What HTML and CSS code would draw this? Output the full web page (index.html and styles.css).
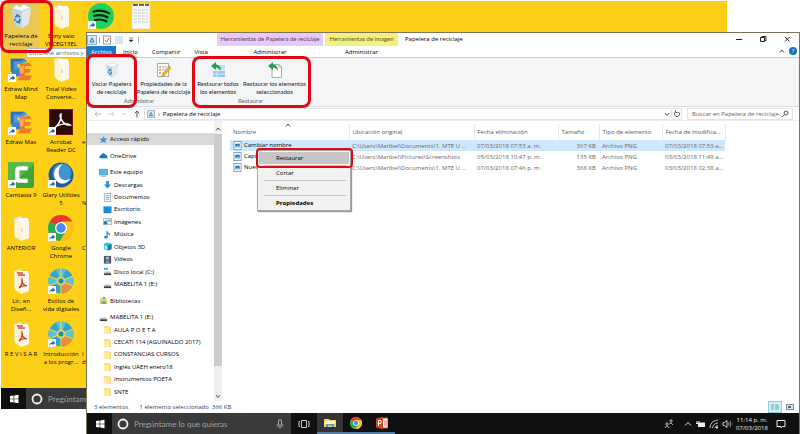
FILE: index.html
```html
<!DOCTYPE html>
<html lang="es">
  <head>
    <meta charset="UTF-8" />
    <meta name="viewport" content="width=device-width, initial-scale=1.0" />
    <title>Papelera de reciclaje</title>
    <link rel="stylesheet" href="styles.css" />
  </head>
  <body>
    <!-- shared icons -->
    <svg class="defs" aria-hidden="true">
      <symbol id="i-bin" viewBox="0 0 26 28">
        <path d="M3 6 L14 9 L14 27 L6 24 Z" fill="#c3d3e0" />
        <path d="M14 9 L24 5 L21 23 L14 27 Z" fill="#dfe8ef" />
        <path d="M3 6 L8 2 L12 4 L16 1 L24 5 L14 9 Z" fill="#f7fafc" stroke="#aebdca" stroke-width=".7" />
        <path d="M7 5 L13 7 L20 4 L16 3 L12 5 Z" fill="#fff" />
        <path d="M7 16 L9 13 L12 15 M12 17 L11 21 L8 20 M7 19 L6 17" fill="none" stroke="#1f7fd0" stroke-width="1.9" />
      </symbol>
      <symbol id="i-binsmall" viewBox="0 0 10 10">
        <rect x=".5" y=".5" width="9" height="9" fill="#d6e6f3" stroke="#8fb2cd" />
        <path d="M3 7 L5 3 L7 7 Z" fill="none" stroke="#2b74b8" />
      </symbol>
      <symbol id="i-shortcut" viewBox="0 0 8 8">
        <rect width="8" height="8" fill="#fff" />
        <path d="M1.5 7 C1.5 4.500 3 3.200 4.500 3.200 V1.500 L7.200 4 L4.500 6.300 V4.800 C3.200 4.800 2.300 5.500 1.500 7 Z" fill="#1b5fb4" />
      </symbol>
      <symbol id="i-folderbig" viewBox="0 0 20 26">
        <path d="M3 3 L10 1 V23 L3 20 Z" fill="#f6e6ad" />
        <path d="M7 3 L17 3 V22 L7 24 Z" fill="#fff" />
        <path d="M4 4 L10 7 V26 L4 22 Z" fill="#fdf3d0" />
        <path d="M10 7 L18 5 V23 L10 26 Z" fill="#fbf7ea" />
        <path d="M11 13 V17" stroke="#cfc9b4" />
      </symbol>
      <symbol id="i-folderpdf" viewBox="0 0 20 26">
        <use href="#i-folderbig" />
        <path d="M6 5 H12 M7 7 H14" stroke="#e0473a" stroke-width="1.500" />
        <path d="M8 20 C11 17 12 13 11 11 C10 14 13 18 16 18 C13 17 10 18 8 20" fill="none" stroke="#c62f27" stroke-width="1.200" />
      </symbol>
      <symbol id="i-edraw" viewBox="0 0 26 28">
        <path d="M2 3 H17 L20 6 L13 9 H9 V12 H17 L13 17 H2 Z" fill="#4b98dc" />
        <path d="M2 3 H17 L13 6 H5 V14 L2 17 Z" fill="#2d6fbb" />
        <path d="M12 9 L22 7 L25 11 H17 V14 H24 L22 18 H17 V21 H25 L22 26 H9 L12 22 Z" fill="#f0792b" />
        <path d="M3 15 L13 14 L16 17 L11 22 H3 Z" fill="#3c83cb" />
        <path d="M11 12 L16 10 V18 L12 20 Z" fill="#f9a662" />
      </symbol>
      <symbol id="i-acrobat" viewBox="0 0 24 26">
        <rect x=".5" y=".5" width="23" height="25" fill="#2a0a0a" stroke="#6c1512" />
        <path d="M4 20 C9 17 13 11 12 5 C9 6 14 17 21 16 C16 13 8 16 4 20 Z" fill="none" stroke="#fff" stroke-width="1.500" />
      </symbol>
      <symbol id="i-camtasia" viewBox="0 0 25 25">
        <rect width="25" height="25" rx="2" fill="#3fa535" />
        <path d="M0 2 Q0 0 2 0 H23 Q25 0 25 2 L0 25 Z" fill="#57b947" />
        <path d="M19 4 H11 Q7 4 7 8 V16 Q7 20 11 20 H19 V16 H12 Q11 16 11 15 V9 Q11 8 12 8 H19 Z" fill="#fff" />
      </symbol>
      <symbol id="i-glary" viewBox="0 0 26 26">
        <circle cx="13" cy="13" r="12.500" fill="#1d5c9f" />
        <circle cx="14" cy="11" r="9.500" fill="#3f93cf" />
        <path d="M15 2 C6 4 4 13 8 18 C12 24 20 22 23 16 C18 20 12 18 11 13 C10 8 12 4 15 2 Z" fill="#fff" />
      </symbol>
      <symbol id="i-chrome" viewBox="0 0 24 24">
        <circle cx="12" cy="12" r="12" fill="#fbc116" />
        <path d="M12 12 L1.600 6 A12 12 0 0 1 22.400 6 H12 Z" fill="#e33b2e" />
        <path d="M12 12 L1.600 6 A12 12 0 0 0 11 24 L17 14.500 Z" fill="#2da94f" />
        <path d="M12 12 L22.400 6 A12 12 0 0 1 11 24 L17 14.500 Z" fill="#fbc116" />
        <circle cx="12" cy="12" r="5.600" fill="#fff" />
        <circle cx="12" cy="12" r="4.300" fill="#4a8af4" />
      </symbol>
      <symbol id="i-wheel" viewBox="0 0 26 26">
        <circle cx="13" cy="13" r="12.500" fill="#2fa6cf" />
        <path d="M13 13 L8 1.500 A12.500 12.500 0 0 1 18 1.500 Z" fill="#5cc0dc" />
        <path d="M13 13 L24.500 8 A12.500 12.500 0 0 1 24 18 Z" fill="#5cc0dc" />
        <path d="M13 13 L24 18 A12.500 12.500 0 0 1 14 25.500 Z" fill="#ee8a3c" />
        <path d="M13 13 L1.500 8 A12.500 12.500 0 0 0 1.500 18 Z" fill="#5cc0dc" />
        <path d="M1 8 L25 18 M25 8 L1 18 M13 0 V26" stroke="#fbd22b" stroke-width="1.200" />
        <circle cx="13" cy="13" r="4.500" fill="#c9d67a" />
        <circle cx="13" cy="13" r="2.500" fill="#2b8d90" />
      </symbol>
      <symbol id="i-spotify" viewBox="0 0 24 24">
        <circle cx="12" cy="12" r="12" fill="#1fd15f" />
        <path d="M5 8 Q12.500 5.500 19.500 9.500 M5.500 12 Q12 10 18 13.200 M6.500 15.800 Q12 14.300 17 16.900" fill="none" stroke="#10240f" stroke-width="2" stroke-linecap="round" />
      </symbol>
      <symbol id="i-sheet" viewBox="0 0 20 26">
        <rect x="1" y="1" width="18" height="25" fill="#fbfbf6" stroke="#dcd8c4" stroke-width=".7" />
        <path d="M2 2 H7 M8 2 H13 M14 2 H18" stroke="#333" stroke-width="1.500" />
        <path d="M3 7 H17 M3 10 H17 M3 13 H17 M3 16 H17 M3 19 H17" stroke="#b9c4d4" stroke-dasharray="3 1" />
      </symbol>
      <symbol id="i-props" viewBox="0 0 16 16">
        <rect x="1.500" y="1.500" width="11" height="13" fill="#fff" stroke="#a9a9a9" />
        <path d="M3 5 H5 M3 8 H5 M3 11 H5" stroke="#c99a2c" stroke-width="1.500" />
        <path d="M6 5 H11 M6 8 H10 M6 11 H9" stroke="#aaa" />
        <path d="M6 13 L13 4 L15 6 L8 14 L5.500 14.500 Z" fill="#f0b72f" stroke="#a57a1c" stroke-width=".5" />
      </symbol>
      <symbol id="i-restoreall" viewBox="0 0 16 16">
        <rect x="7" y="3" width="8" height="5" fill="#b6defa" />
        <rect x="3" y="9" width="12" height="6" fill="#8cc8f4" />
        <path d="M7 8 V15 M3 12 H15" stroke="#d7edfc" />
        <path d="M1 4 L6 0 V2.500 Q11 3 11 9 Q9 5.500 6 5.500 V8 Z" fill="#1f9d4b" />
      </symbol>
      <symbol id="i-restoresel" viewBox="0 0 16 16">
        <path d="M5 2.500 H12 L14.500 5 V15.500 H5 Z" fill="#fff" stroke="#a9a9a9" />
        <path d="M12 2.500 V5 H14.500" fill="none" stroke="#a9a9a9" />
        <path d="M1 4 L6 0 V2.500 Q11 3 11 9 Q9 5.500 6 5.500 V8 Z" fill="#1f9d4b" />
      </symbol>
      <symbol id="i-png" viewBox="0 0 9 10">
        <rect x=".5" y=".5" width="8" height="9" fill="#fff" stroke="#6ba2cf" />
        <rect x="2" y="3" width="5" height="4" fill="#2a76b6" />
        <path d="M2 7 L4 5 L5 6 L6 5 L7 7" fill="#9ad0ee" />
      </symbol>
      <symbol id="i-folder" viewBox="0 0 10 10">
        <path d="M1 1 H6 L7 2 H9 V10 H1 Z" fill="#fbdc80" />
        <path d="M1 3 H7 V10 H1 Z" fill="#ffe9a6" />
      </symbol>
      <symbol id="i-drive" viewBox="0 0 10 10">
        <path d="M2 5 H8 L9 7 H1 Z" fill="#b9bec2" />
        <rect x="1" y="7" width="8" height="2" fill="#3c4044" />
      </symbol>
      <symbol id="i-windows" viewBox="0 0 10 10">
        <path d="M1 2 L4.600 1.500 V4.700 H1 Z M5.200 1.400 L9.500 .8 V4.700 H5.200 Z M1 5.300 H4.600 V8.500 L1 8 Z M5.200 5.300 H9.500 V9.200 L5.200 8.600 Z" fill="#fff" />
      </symbol>
      <symbol id="i-cortana" viewBox="0 0 12 12">
        <circle cx="6" cy="6" r="4.500" fill="none" stroke="#f2f2f2" stroke-width="1.800" />
      </symbol>
      <symbol id="i-down" viewBox="0 0 8 8"><path d="M2 3 L4 5.500 L6 3" fill="none" stroke="#555" /></symbol>
      <symbol id="i-up" viewBox="0 0 8 8"><path d="M2 5.500 L4 3 L6 5.500" fill="none" stroke="#555" /></symbol>
    </svg>

    <main class="desktop">
      <ul class="icons">
        <li><a class="shortcut selected" href="#"><svg><use href="#i-bin" /></svg>Papelera de reciclaje</a></li>
        <li><a class="shortcut" href="#"><svg><use href="#i-edraw" /></svg><svg class="link"><use href="#i-shortcut" /></svg>Edraw Mind Map</a></li>
        <li><a class="shortcut" href="#"><svg><use href="#i-edraw" /></svg><svg class="link"><use href="#i-shortcut" /></svg>Edraw Max</a></li>
        <li><a class="shortcut" href="#"><svg><use href="#i-camtasia" /></svg><svg class="link"><use href="#i-shortcut" /></svg>Camtasia 9</a></li>
        <li><a class="shortcut" href="#"><svg><use href="#i-folderbig" /></svg>ANTERIOR</a></li>
        <li><a class="shortcut" href="#"><svg><use href="#i-folderpdf" /></svg>Lic. en<br />Diseñ...</a></li>
        <li><a class="shortcut" href="#"><svg><use href="#i-folderpdf" /></svg>R E V I S A R</a></li>
        <li><a class="shortcut" href="#"><svg><use href="#i-folderbig" /></svg>Sony vaio VPCEG13EL</a></li>
        <li><a class="shortcut" href="#"><svg><use href="#i-folderbig" /></svg>Total Video Converte...</a></li>
        <li><a class="shortcut" href="#"><svg><use href="#i-acrobat" /></svg><svg class="link"><use href="#i-shortcut" /></svg>Acrobat<br />Reader DC</a></li>
        <li><a class="shortcut" href="#"><svg><use href="#i-glary" /></svg><svg class="link"><use href="#i-shortcut" /></svg>Glary Utilities<br />5</a></li>
        <li><a class="shortcut" href="#"><svg><use href="#i-chrome" /></svg><svg class="link"><use href="#i-shortcut" /></svg>Google<br />Chrome</a></li>
        <li><a class="shortcut" href="#"><svg><use href="#i-wheel" /></svg><svg class="link"><use href="#i-shortcut" /></svg>Estilos de<br />vida digitales</a></li>
        <li><a class="shortcut" href="#"><svg><use href="#i-wheel" /></svg><svg class="link"><use href="#i-shortcut" /></svg>Introducción<br />a los progr...</a></li>
        <li><a class="shortcut" href="#" aria-label="Spotify"><svg><use href="#i-spotify" /></svg><svg class="link"><use href="#i-shortcut" /></svg></a></li>
        <li></li>
        <li><a class="shortcut behind" href="#"><svg></svg>e</a></li>
        <li><a class="shortcut behind" href="#"><svg></svg><br />N</a></li>
        <li><a class="shortcut behind" href="#"><svg></svg>C</a></li>
        <li></li>
        <li><a class="shortcut behind" href="#"><svg></svg>I<br />d</a></li>
        <li><a class="shortcut" href="#" aria-label="Hoja"><svg><use href="#i-sheet" /></svg></a></li>
      </ul>
      <div class="tooltip">Contiene archivos y</div>
      <div class="taskbar">
        <button class="start" aria-label="Inicio"><svg><use href="#i-windows" /></svg></button>
        <label class="ask"><svg><use href="#i-cortana" /></svg><input type="text" placeholder="Pregúntame lo que quieras" aria-label="Buscar" /></label>
      </div>
    </main>

    <section class="window">
      <header class="titlebar">
        <div class="title-left">
          <div class="quick">
            <svg><use href="#i-binsmall" /></svg><i></i>
            <svg viewBox="0 0 10 10"><rect x="1.500" y="1" width="7" height="8" fill="#fff" stroke="#999" /><path d="M3 5 L5 7 L7 3" fill="none" stroke="#d2553c" /></svg>
            <svg viewBox="0 0 10 10"><rect x="1" y="1" width="8" height="8" fill="#d9e4f5" /></svg>
            <svg viewBox="0 0 10 10"><path d="M3 3 H7 M3 5 H7 L5 7 Z" fill="#333" stroke="#333" stroke-width=".6" /></svg><i></i>
          </div>
          <nav class="tabs">
            <button class="file">Archivo</button>
            <button>Inicio</button>
            <button>Compartir</button>
            <button>Vista</button>
          </nav>
        </div>
        <div class="context purple"><span>Herramientas de Papelera de reciclaje</span><button>Administrar</button></div>
        <div class="context yellow"><span>Herramientas de imagen</span><button>Administrar</button></div>
        <h1>Papelera de reciclaje</h1>
        <div class="title-right">
          <div class="controls">
            <button aria-label="Minimizar"><svg viewBox="0 0 8 8"><path d="M1 4.500 H7" stroke="#222" /></svg></button>
            <button aria-label="Restaurar ventana"><svg viewBox="0 0 8 8"><path d="M1.500 2.500 H5.500 V6.500 H1.500 Z M3 2.500 V1.500 H7 V5.500 H5.500" fill="none" stroke="#222" /></svg></button>
            <button aria-label="Cerrar"><svg viewBox="0 0 8 8"><path d="M2 2 L6.500 6.500 M6.500 2 L2 6.500" stroke="#222" /></svg></button>
          </div>
          <div class="help">
            <button aria-label="Contraer cinta"><svg><use href="#i-up" /></svg></button>
            <button class="question" aria-label="Ayuda">?</button>
          </div>
        </div>
      </header>

      <div class="ribbon">
        <div class="group">
          <div class="actions">
            <button class="empty"><svg><use href="#i-bin" /></svg>Vaciar Papelera<br />de reciclaje</button>
            <button class="props"><svg><use href="#i-props" /></svg>Propiedades de la<br />Papelera de reciclaje</button>
          </div>
          <span>Administrar</span>
        </div>
        <div class="group">
          <div class="actions">
            <button class="all"><svg><use href="#i-restoreall" /></svg>Restaurar todos<br />los elementos</button>
            <button class="sel"><svg><use href="#i-restoresel" /></svg>Restaurar los elementos<br />seleccionados</button>
          </div>
          <span>Restaurar</span>
        </div>
      </div>

      <div class="address">
        <div class="history">
          <button aria-label="Atrás"><svg viewBox="0 0 8 8"><path d="M7.500 4 H1 M3.500 1.500 L1 4 L3.500 6.500" fill="none" stroke="#bbb" /></svg></button>
          <button aria-label="Adelante"><svg viewBox="0 0 8 8"><path d="M.5 4 H7 M4.500 1.500 L7 4 L4.500 6.500" fill="none" stroke="#ccc" /></svg></button>
          <button aria-label="Recientes"><svg viewBox="0 0 8 8"><path d="M3 3.500 L4 4.500 L5 3.500" fill="none" stroke="#aaa" /></svg></button>
          <button aria-label="Subir"><svg viewBox="0 0 8 8"><path d="M4 7.500 V1 M1.500 3.500 L4 1 L6.500 3.500" fill="none" stroke="#555" /></svg></button>
        </div>
        <div class="path">
          <svg class="place"><use href="#i-binsmall" /></svg>
          <span class="sep">›</span>
          <span class="crumb">Papelera de reciclaje</span>
          <button aria-label="Anteriores"><svg><use href="#i-down" /></svg></button>
          <button class="refresh" aria-label="Actualizar"><svg viewBox="0 0 8 8"><path d="M5.500 2 A2.500 2.500 0 1 1 2.500 2 M2.500 .5 V2.500 H4.500" fill="none" stroke="#555" /></svg></button>
        </div>
        <label class="search">
          <input type="text" placeholder="Buscar en Papelera de reciclaje" aria-label="Buscar en Papelera de reciclaje" />
          <svg viewBox="0 0 8 8"><circle cx="5" cy="3" r="2" fill="none" stroke="#555" /><path d="M3.500 4.500 L1 7" stroke="#555" /></svg>
        </label>
      </div>

      <div class="content">
        <nav class="tree">
          <a class="top current" href="#"><svg viewBox="0 0 10 10"><path d="M5 1 L6.500 4 L9.500 4 L7 6 L8 9 L5 7.500 L1 9 L3 6 L.5 4 L4 4 Z" fill="#3f97dd" /></svg>Acceso rápido</a>
          <a class="top gap" href="#"><svg viewBox="0 0 10 10"><path d="M1 8 Q-.5 5 2.500 4.500 Q4 1 7 4 Q10 4.500 9.500 8 Z" fill="#1373c4" /></svg>OneDrive</a>
          <a class="top gap" href="#"><svg viewBox="0 0 10 10"><rect x=".5" y="1.500" width="9" height="6" fill="#56b7f0" stroke="#7696ab" /><path d="M2 9 H8" stroke="#718796" /></svg>Este equipo</a>
          <a href="#"><svg viewBox="0 0 10 10"><path d="M3.500 1 H6.500 V5 H9 L5 9.500 L1 5 H3.500 Z" fill="#2f89d8" /></svg>Descargas</a>
          <a href="#"><svg viewBox="0 0 10 10"><rect x="1.500" y=".5" width="7" height="9" fill="#fff" stroke="#9eb2c0" /><path d="M3 3 H7 M3 5 H7 M3 7 H7" stroke="#6da5d3" /></svg>Documentos</a>
          <a href="#"><svg viewBox="0 0 10 10"><rect x=".5" y="1.500" width="9" height="7" fill="#1b8de0" /><path d="M1 8.500 H9" stroke="#0b5ea8" /></svg>Escritorio</a>
          <a href="#"><svg viewBox="0 0 10 10"><rect x=".5" y="1.500" width="9" height="7" fill="#e9f1f5" stroke="#a9b7c0" /><path d="M1 8 V5 L4 4 L5 8 Z" fill="#357c8a" /><path d="M5 4 H9" stroke="#67b5e5" stroke-width="2" /></svg>Imágenes</a>
          <a href="#"><svg viewBox="0 0 10 10"><path d="M4.500 1 V8" stroke="#1b84cf" stroke-width="1.200" /><path d="M4.500 1 Q5 3 8 4.500 L7 7 Q7 4.500 4.500 4 Z" fill="#1b84cf" /><ellipse cx="3.200" cy="8" rx="1.900" ry="1.500" fill="#1b84cf" /></svg>Música</a>
          <a href="#"><svg viewBox="0 0 10 10"><path d="M1 2 L5 .5 L9.500 2 V8 L5.500 9.500 L1 8 Z" fill="#37c1dc" /><path d="M5.500 3.500 L9.500 2 V8 L5.500 9.500 Z" fill="#0d81a6" /><path d="M2 4 L4.500 4.800 V8 L2 7 Z" fill="#c9f3fb" /></svg>Objetos 3D</a>
          <a href="#"><svg viewBox="0 0 10 10"><rect x="1" y="1" width="8" height="8.500" fill="#465260" /><rect x="3" y="2" width="4" height="3" fill="#9fb8cf" /><rect x="3" y="6" width="4" height="3" fill="#7892ab" /></svg>Vídeos</a>
          <a href="#"><svg viewBox="0 0 10 10"><path d="M1 1 H3 V3 H1 Z M3.500 1 H5.500 V3 H3.500 Z" fill="#1b9de2" /><use href="#i-drive" /></svg>Disco local (C:)</a>
          <a href="#"><svg><use href="#i-drive" /></svg>MABELITA 1 (E:)</a>
          <a class="top gap" href="#"><svg viewBox="0 0 10 10"><path d="M1 3 L4 2 L5 4 H9 V9 H1 Z" fill="#f4cf62" /><path d="M3 6 H8 V9 H3 Z" fill="#48b1cf" /><path d="M4 1 H7 V4 H5 Z" fill="#55b56a" /></svg>Bibliotecas</a>
          <a class="top gap" href="#"><svg><use href="#i-drive" /></svg>MABELITA 1 (E:)</a>
          <a href="#"><svg><use href="#i-folder" /></svg>AULA P O E T A</a>
          <a href="#"><svg><use href="#i-folder" /></svg>CECATI 114 (AGUINALDO 2017)</a>
          <a href="#"><svg><use href="#i-folder" /></svg>CONSTANCIAS CURSOS</a>
          <a href="#"><svg><use href="#i-folder" /></svg>Inglés UAEH enero18</a>
          <a href="#"><svg><use href="#i-folder" /></svg>Instrumentos POETA</a>
          <a href="#"><svg><use href="#i-folder" /></svg>SNTE</a>
        </nav>
        <div class="scrollbar">
          <svg><use href="#i-up" /></svg>
          <div class="thumb"></div>
          <svg><use href="#i-down" /></svg>
        </div>
        <div class="files">
          <table>
            <colgroup>
              <col class="c-name" /><col class="c-place" /><col class="c-deleted" /><col class="c-size" /><col class="c-type" /><col class="c-type" />
            </colgroup>
            <thead>
              <tr>
                <th><svg class="sort"><use href="#i-up" /></svg>Nombre</th>
                <th>Ubicación original</th>
                <th>Fecha eliminación</th>
                <th>Tamaño</th>
                <th>Tipo de elemento</th>
                <th>Fecha de modifica...</th>
              </tr>
            </thead>
            <tbody>
              <tr class="active">
                <td><svg><use href="#i-png" /></svg>Cambiar nombre</td>
                <td>C:\Users\Maribel\Documents\1. MTE U ...</td>
                <td>07/03/2018 07:53 a. m.</td>
                <td class="num">367 KB</td>
                <td>Archivo PNG</td>
                <td>07/03/2018 07:53 a...</td>
              </tr>
              <tr>
                <td><svg><use href="#i-png" /></svg>Captura</td>
                <td>C:\Users\Maribel\Pictures\Screenshots</td>
                <td>05/03/2018 10:47 p. m.</td>
                <td class="num">135 KB</td>
                <td>Archivo PNG</td>
                <td>03/03/2018 11:49 a...</td>
              </tr>
              <tr>
                <td><svg><use href="#i-png" /></svg>Nuevo</td>
                <td>C:\Users\Maribel\Documents\1. MTE U ...</td>
                <td>07/03/2018 07:46 p. m.</td>
                <td class="num">368 KB</td>
                <td>Archivo PNG</td>
                <td>03/03/2018 02:38 a...</td>
              </tr>
            </tbody>
          </table>
          <div class="menu">
            <button class="hover">Restaurar</button>
            <hr />
            <button>Cortar</button>
            <hr />
            <button>Eliminar</button>
            <hr />
            <button class="default">Propiedades</button>
            <div class="mark mark-restore"></div>
          </div>
        </div>
      </div>

      <footer class="status">
        <span>3 elementos</span>
        <span>1 elemento seleccionado&nbsp; 366 KB</span>
        <div class="views">
          <button class="on" aria-label="Detalles"><svg viewBox="0 0 12 10"><path d="M2 3 H5 M6 3 H10 M2 5 H5 M6 5 H10 M2 7 H5 M6 7 H10" stroke="#5aa5be" /></svg></button>
          <button aria-label="Iconos grandes"><svg viewBox="0 0 12 10"><rect x="3.500" y="2.500" width="7" height="5" fill="#dbe5ea" stroke="#889" /><rect x="5" y="4" width="3" height="2" fill="#36727f" /></svg></button>
        </div>
      </footer>

      <div class="taskbar">
        <button class="start" aria-label="Inicio"><svg><use href="#i-windows" /></svg></button>
        <label class="ask">
          <svg><use href="#i-cortana" /></svg>
          <input type="text" placeholder="Pregúntame lo que quieras" aria-label="Preguntar a Cortana" />
          <svg viewBox="0 0 12 12"><rect x="4.500" y="1.500" width="3" height="6" rx="1.500" fill="none" stroke="#aaa" /><path d="M2.800 6 Q3 9 6 9 Q9 9 9.200 6 M6 9 V11" fill="none" stroke="#aaa" stroke-width=".8" /></svg>
        </label>
        <div class="apps">
          <button aria-label="Vista de tareas"><svg viewBox="0 0 12 12"><path d="M3.500 2.500 H8.500 V9.500 H3.500 Z M2 3.500 H1 V8.500 H2 M10 3.500 H11 V8.500 H10" fill="none" stroke="#ddd" stroke-width=".9" /></svg></button>
          <button class="open front" aria-label="Explorador"><svg viewBox="0 0 12 12"><path d="M0 2 H5 L6 3 H12 V10 H0 Z" fill="#f5d263" /><path d="M1 4 H11 V7 H1 Z" fill="#fff2b8" /><path d="M2 10 V7 H10 V10 H8 V8.500 H4 V10 Z" fill="#42a5dc" /></svg></button>
          <button class="open" aria-label="Chrome"><svg><use href="#i-chrome" /></svg></button>
          <button class="open" aria-label="PowerPoint"><svg viewBox="0 0 12 12"><rect x="5" y="1" width="7" height="10" fill="#fff" stroke="#d24726" /><path d="M8 4 H11 M8 6 H11 M8 8 H11" stroke="#d24726" stroke-width=".8" /><path d="M0 1.500 L7 0 V12 L0 10.500 Z" fill="#d24726" /><path d="M2.500 9 V3.500 H4 Q5.300 3.500 5.300 5 Q5.300 6.500 4 6.500 H2.500" fill="none" stroke="#fff" /></svg></button>
        </div>
        <div class="tray">
          <svg viewBox="0 0 10 10"><circle cx="3" cy="5" r="1.200" fill="none" stroke="#ddd" stroke-width=".8" /><circle cx="7" cy="2" r="1.200" fill="none" stroke="#ddd" stroke-width=".8" /><path d="M1 9 Q3 5 5 9 M5.500 5 Q7 2.500 9 6" fill="none" stroke="#ddd" stroke-width=".8" /></svg>
          <svg class="more" viewBox="0 0 10 10"><path d="M2 6.500 L5 3.500 L8 6.500" fill="none" stroke="#eee" /></svg>
          <svg viewBox="0 0 10 10"><rect x="2" y="3.500" width="7" height="4.500" fill="#eee" /><path d="M1 2 V4 M3 2 V4 M0 4.500 H4" stroke="#eee" /></svg>
          <svg viewBox="0 0 10 10"><path d="M1 9 Q1 2 9 1 M3.500 9 Q4 4.500 9 4 M6 9 Q6 7 9 6.500" fill="none" stroke="#bbb" /><circle cx="8" cy="8.500" r="1" fill="#fff" /></svg>
          <svg viewBox="0 0 10 10"><path d="M1 3.500 H2.500 L5 1.500 V8.500 L2.500 6.500 H1 Z" fill="none" stroke="#ddd" stroke-width=".9" /><path d="M6.500 3.500 Q7.500 5 6.500 6.500 M8 2 Q10 5 8 8" fill="none" stroke="#bbb" stroke-width=".8" /></svg>
          <time datetime="2018-03-07T23:14">11:14 p. m.<br />07/03/2018</time>
          <svg viewBox="0 0 10 10"><path d="M1 1.500 H9 V7.500 H6.500 L5 9 V7.500 H1 Z" fill="none" stroke="#eee" /></svg>
        </div>
      </div>
    </section>

    <!-- red marks over the steps to follow -->
    <div class="mark mark-bin"></div>
    <div class="mark mark-empty"></div>
    <div class="mark mark-all"></div>
  </body>
</html>
```

FILE: styles.css
```css
* {
  box-sizing: border-box;
}
body {
  margin: 0;
  min-height: 100vh;
  position: relative;
  overflow: hidden;
  background: #fff;
  font-family: "Open Sans", "Noto Sans", sans-serif;
  font-size: 6px;
  line-height: 8px;
  color: #000;
}
button,
input {
  font: inherit;
  color: inherit;
  background: none;
  border: 0;
  padding: 0;
  margin: 0;
  outline: none;
}
button,
a {
  cursor: pointer;
}
a {
  color: inherit;
  text-decoration: none;
}
svg {
  width: 10px;
  height: 10px;
  flex: none;
}
.defs {
  position: absolute;
  width: 0;
  height: 0;
}

/* desktop */
.desktop {
  position: absolute;
  inset: 1px 73px 25px 1px;
  background: #fdd017;
  display: flex;
  flex-direction: column;
}
.icons {
  flex: 1;
  list-style: none;
  margin: 0;
  padding: 2px 0 0;
  display: grid;
  grid-auto-flow: column;
  grid-template-rows: repeat(7, 53px);
  grid-auto-columns: 40px;
}
.shortcut {
  display: block;
  position: relative;
  text-align: center;
  height: 49px;
}
.shortcut svg {
  display: block;
  width: 26px;
  height: 26px;
  margin: 0 auto 3px;
}
.shortcut .link {
  position: absolute;
  left: 7px;
  top: 18px;
  width: 8px;
  height: 8px;
}
.selected {
  background: #e9c94f;
  margin: 0 2px;
}
.behind {
  text-align: left;
  padding-left: 1px;
}
.tooltip {
  position: absolute;
  left: 25px;
  top: 47px;
  width: 70px;
  padding: 0 2px;
  background: #fff;
  border: 1px solid #bbb;
  color: #666;
  white-space: nowrap;
}

/* taskbar */
.taskbar {
  height: 21px;
  flex: none;
  display: flex;
  align-items: stretch;
  background: #101010;
  color: #eee;
}
.start {
  width: 25px;
  flex: none;
  display: flex;
  align-items: center;
  justify-content: center;
}
.ask {
  width: 179px;
  flex: none;
  display: flex;
  align-items: center;
  gap: 5px;
  padding: 0 5px;
  background: #3a3a3a;
}
.ask svg {
  width: 12px;
  height: 12px;
}
.ask input {
  flex: 1;
  min-width: 0;
  font-family: Lato, "Open Sans", sans-serif;
  font-size: 8px;
}
.ask input::placeholder {
  color: #a2a2a2;
}
.apps {
  display: flex;
}
.apps button {
  width: 26px;
  display: flex;
  align-items: center;
  justify-content: center;
}
.apps svg {
  width: 12px;
  height: 12px;
}
.apps .open {
  border-bottom: 2px solid #527ca3;
}
.apps .front {
  background: #343434;
}
.tray {
  margin-left: auto;
  display: flex;
  align-items: center;
  gap: 3px;
  padding-right: 13px;
}
.tray .more {
  margin-left: 6px;
}
.tray time {
  width: 34px;
  text-align: center;
  margin-right: 4px;
  white-space: nowrap;
}

/* explorer window */
.window {
  position: absolute;
  inset: 32px 0 0 86px;
  display: flex;
  flex-direction: column;
  background: #fff;
  border: 1px solid #7d7458;
  border-bottom: 0;
}
.titlebar {
  display: flex;
  height: 25px;
  border-bottom: 1px solid #d9bfe6;
}
.title-left {
  width: 130px;
}
.quick {
  display: flex;
  align-items: center;
  gap: 2px;
  height: 13px;
  padding-top: 1px;
}
.quick i {
  width: 1px;
  height: 6px;
  background: #aaa;
}
.tabs {
  display: flex;
  height: 11px;
}
.tabs button {
  padding: 0 7px;
}
.tabs .file {
  width: 29px;
  padding: 0;
  background: #1979ca;
  color: #fff;
}
.context {
  display: flex;
  flex-direction: column;
  text-align: center;
  padding: 0;
  margin-right: 2px;
  white-space: nowrap;
}
.context span {
  height: 13px;
  line-height: 12px;
  font-family: Lato, "Open Sans", sans-serif;
}
.context button {
  flex: 1;
}
.purple {
  width: 106px;
}
.purple span {
  background: #e7c9fa;
  color: #5b3a70;
}
.yellow {
  width: 73px;
}
.yellow span {
  background: #f3f082;
  color: #55541a;
}
h1 {
  font-size: 6px;
  line-height: 12px;
  font-weight: 400;
  margin: 0 0 0 5px;
}
.title-right {
  margin-left: auto;
  display: flex;
  flex-direction: column;
  align-items: flex-end;
}
.controls,
.help {
  display: flex;
  align-items: center;
  height: 12px;
}
.controls {
  gap: 16px;
  padding-right: 8px;
}
.controls button,
.help button {
  display: flex;
}
.controls svg,
.help svg {
  width: 8px;
  height: 8px;
}
.help {
  gap: 3px;
  padding-right: 2px;
}
.help .question {
  width: 8px;
  height: 8px;
  border-radius: 50%;
  background: #1171b9;
  color: #fff;
  justify-content: center;
}

.ribbon {
  display: flex;
  height: 49px;
  background: #f4f5f7;
  border-bottom: 1px solid #dcdde0;
  font-family: Lato, "Open Sans", sans-serif;
}
.group {
  display: flex;
  flex-direction: column;
  text-align: center;
  border-right: 1px solid #e2e3e6;
  padding: 4px 2px 0 0;
}
.group > span {
  margin-top: 1px;
  color: #666;
}
.actions {
  display: flex;
  color: #222;
}
.actions button {
  white-space: nowrap;
}
.actions svg {
  display: block;
  width: 16px;
  height: 16px;
  margin: 0 auto 2px;
}
.empty {
  width: 49px;
}
.props {
  width: 55px;
}
.all {
  width: 48px;
}
.sel {
  width: 65px;
}

.address {
  display: flex;
  align-items: center;
  height: 14px;
  border-bottom: 1px solid #eee;
}
.history {
  display: flex;
  gap: 5px;
  padding: 0 3px 0 7px;
}
.history svg,
.path button svg,
.search svg {
  display: block;
  width: 8px;
  height: 8px;
}
.path {
  flex: 1;
  display: flex;
  align-items: center;
  height: 12px;
  border: 1px solid #e3e3e3;
  margin-right: 5px;
}
.path .place {
  width: 8px;
  height: 8px;
  margin-left: 2px;
}
.sep {
  margin: 0 3px;
}
.crumb {
  flex: 1;
}
.refresh {
  border-left: 1px solid #e3e3e3;
  padding-left: 1px;
}
.search {
  display: flex;
  align-items: center;
  width: 106px;
  height: 12px;
  border: 1px solid #e3e3e3;
  padding: 0 3px 0 4px;
  margin-right: 6px;
}
.search input {
  flex: 1;
  min-width: 0;
}
.search input::placeholder {
  color: #666;
}

.content {
  flex: 1;
  min-height: 0;
  display: flex;
}
.tree {
  width: 127px;
  display: flex;
  flex-direction: column;
  padding: 12px 0 3px;
}
.tree a {
  flex: 1;
  display: flex;
  align-items: center;
  gap: 2px;
  padding-left: 16px;
  white-space: nowrap;
}
.tree .top {
  padding-left: 12px;
}
.tree .gap {
  margin-top: 4px;
}
.tree .current {
  background: #d9d9d9;
}
.tree svg {
  width: 9px;
  height: 9px;
}
.scrollbar {
  width: 8px;
  display: flex;
  flex-direction: column;
  background: #f0f0f0;
  padding: 4px 0 1px;
}
.scrollbar svg {
  width: 8px;
  height: 8px;
}
.thumb {
  flex: 1;
  background: #cdcdcd;
  margin: 1px 0 26px;
}
.files {
  flex: 1;
  position: relative;
  padding: 3px 0 0 8px;
}
table {
  table-layout: fixed;
  width: 495px;
  border-collapse: collapse;
}
.c-name {
  width: 119px;
}
.c-place {
  width: 125px;
}
.c-deleted {
  width: 84px;
}
.c-size {
  width: 41px;
}
.c-type {
  width: 63px;
}
th,
td {
  height: 11px;
  padding: 0 3px;
  text-align: left;
  font-weight: 400;
  white-space: nowrap;
  color: #666;
}
th {
  height: 16px;
  position: relative;
  color: #4c5b70;
  border-right: 1px solid #e8e8e8;
}
.sort {
  position: absolute;
  left: 54px;
  top: -3px;
  width: 8px;
  height: 8px;
}
td svg {
  width: 9px;
  height: 9px;
  vertical-align: middle;
  margin-right: 2px;
}
td:first-child {
  color: #000;
}
.num {
  text-align: right;
}
.active {
  background: #cce8ff;
}
.menu {
  position: absolute;
  left: 35px;
  top: 29px;
  width: 94px;
  padding: 1px;
  background: #f1f1f1;
  border: 1px solid #a9a9a9;
  box-shadow: 1px 1px 1px #999;
}
.menu button {
  display: block;
  width: 100%;
  height: 12px;
  padding-left: 17px;
  text-align: left;
}
.menu .hover {
  background: #c6c6c6;
}
.menu .default {
  font-weight: 700;
}
.menu hr {
  border: 0;
  border-top: 1px solid #c4c4c4;
  margin: 1px 3px 1px 5px;
}

.status {
  display: flex;
  align-items: center;
  gap: 11px;
  height: 12px;
  padding: 0 4px 0 7px;
  color: #34445e;
}
.views {
  margin-left: auto;
  display: flex;
  gap: 2px;
}
.views button {
  display: flex;
}
.views svg {
  width: 12px;
  height: 10px;
}
.views .on {
  background: #d5f0f8;
  outline: 1px solid #8fcbdd;
}

.mark {
  position: absolute;
  border: 3px solid #e30613;
  border-radius: 8px;
  pointer-events: none;
}
.mark-bin {
  left: 0;
  top: 0;
  width: 53px;
  height: 53px;
}
.mark-empty {
  left: 86px;
  top: 54px;
  width: 51px;
  height: 54px;
}
.mark-all {
  left: 192px;
  top: 56px;
  width: 119px;
  height: 52px;
}
.mark-restore {
  left: -2px;
  top: -3px;
  width: 97px;
  height: 20px;
  border-width: 2px;
  border-radius: 4px;
}
```
